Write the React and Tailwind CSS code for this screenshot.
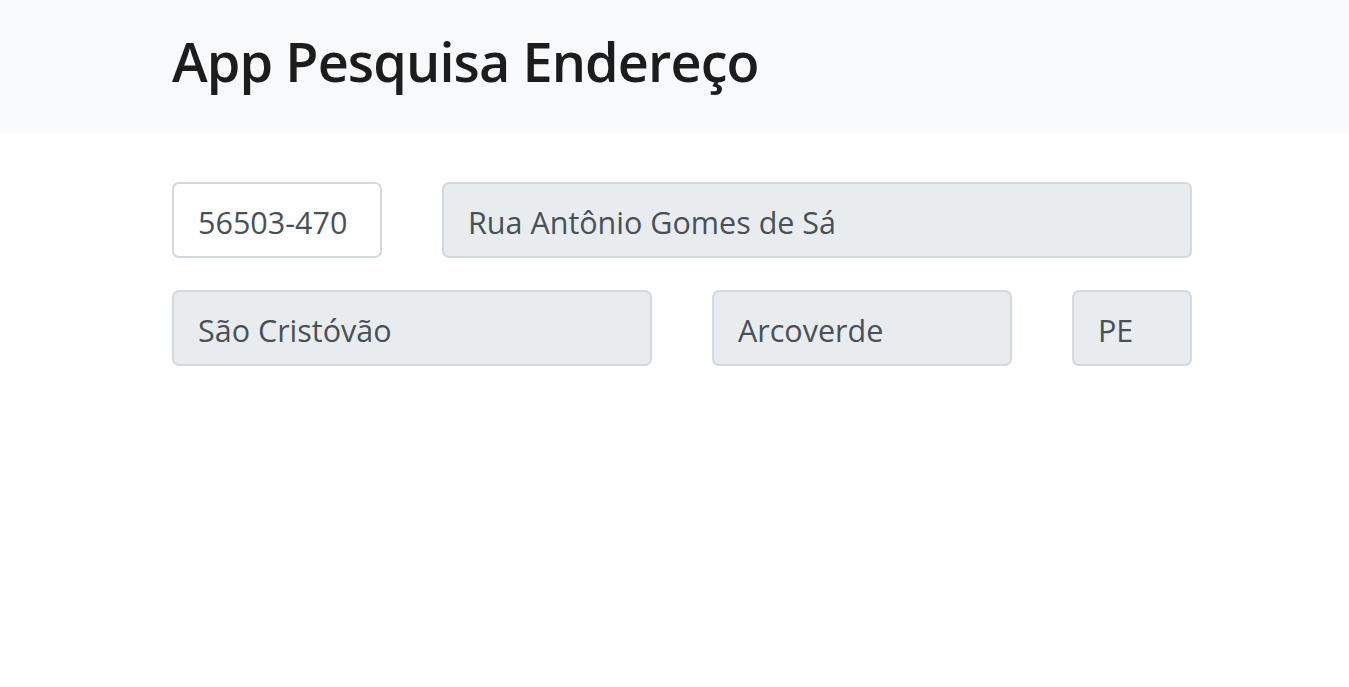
export default function App() {
  const font = { fontFamily: '"Open Sans", "Noto Sans", sans-serif' };
  const inputBase =
    "h-[76px] min-w-0 shrink-0 rounded-[7px] border-2 border-[#d3d8dd] px-[24px] pt-[3px] text-[30.5px] text-[#495057] outline-none";
  return (
    <div className="min-h-[687px] bg-white" style={font}>
      <header className="h-[134px] bg-[#f8f9fa] flex items-center">
        <div className="ml-[172px]">
          <h1 className="text-[54px] font-semibold text-[#1c1c1c] leading-none tracking-[-0.9px] pb-[12px]">
            App Pesquisa Endereço
          </h1>
        </div>
      </header>
      <main className="ml-[172px] w-[1020px] pt-[48px] flex flex-col gap-[32px]">
        <div className="flex gap-[60px]">
          <input
            className={`${inputBase} w-[210px] bg-white`}
            defaultValue="56503-470"
            style={font}
          />
          <input
            className={`${inputBase} w-[750px] bg-[#e9ecef]`}
            defaultValue="Rua Antônio Gomes de Sá"
            readOnly
            style={font}
          />
        </div>
        <div className="flex gap-[60px]">
          <input
            className={`${inputBase} w-[480px] bg-[#e9ecef]`}
            defaultValue="São Cristóvão"
            readOnly
            style={font}
          />
          <input
            className={`${inputBase} w-[300px] bg-[#e9ecef]`}
            defaultValue="Arcoverde"
            readOnly
            style={font}
          />
          <input
            className={`${inputBase} w-[120px] bg-[#e9ecef]`}
            defaultValue="PE"
            readOnly
            style={font}
          />
        </div>
      </main>
    </div>
  );
}
